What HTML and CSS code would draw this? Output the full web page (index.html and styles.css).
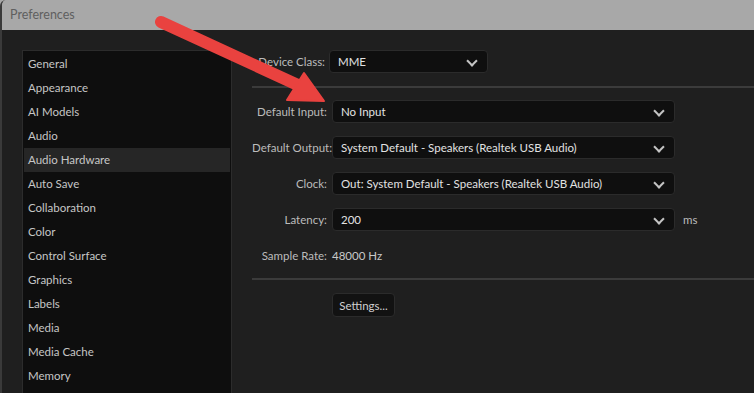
FILE: index.html
```html
<!DOCTYPE html>
<html lang="en">
<head>
    <meta charset="UTF-8">
    <title>Preferences</title>
    <link rel="stylesheet" href="styles.css">
</head>
<body>
    <div class="window">
        <div class="titlebar">Preferences</div>

        <div class="content">
            <!-- Lista de secciones -->
            <ul class="sidebar">
                <li>General</li>
                <li>Appearance</li>
                <li>AI Models</li>
                <li>Audio</li>
                <li class="active">Audio Hardware</li>
                <li>Auto Save</li>
                <li>Collaboration</li>
                <li>Color</li>
                <li>Control Surface</li>
                <li>Graphics</li>
                <li>Labels</li>
                <li>Media</li>
                <li>Media Cache</li>
                <li>Memory</li>
            </ul>

            <div class="pane">
                <div class="device-row">
                    <span class="label">Device Class:</span>
                    <div class="select small">MME <span class="chev"></span></div>
                </div>

                <div class="divider"></div>

                <div class="form">
                    <span class="label">Default Input:</span>
                    <div class="select">No Input <span class="chev"></span></div>
                    <span></span>

                    <span class="label">Default Output:</span>
                    <div class="select">System Default - Speakers (Realtek USB Audio) <span class="chev"></span></div>
                    <span></span>

                    <span class="label">Clock:</span>
                    <div class="select">Out: System Default - Speakers (Realtek USB Audio) <span class="chev"></span></div>
                    <span></span>

                    <span class="label">Latency:</span>
                    <div class="select">200 <span class="chev"></span></div>
                    <span class="unit">ms</span>

                    <span class="label rate">Sample Rate:</span>
                    <span class="value">48000 Hz</span>
                    <span></span>
                </div>

                <div class="divider second"></div>

                <div class="actions">
                    <button class="button">Settings...</button>
                </div>
            </div>
        </div>

        <!-- Flecha roja encima -->
        <svg class="arrow" width="754" height="393" viewBox="0 0 754 393">
            <line x1="161" y1="22" x2="300" y2="86" stroke="#e9423f" stroke-width="12" stroke-linecap="round"/>
            <polygon points="287,100 304,73 324,101" fill="#e9423f" stroke="#e9423f" stroke-width="2" stroke-linejoin="round"/>
        </svg>
    </div>
</body>
</html>
```

FILE: styles.css
```css
body {
    margin: 0;
    padding: 0;
    font-family: 'Lato', 'Noto Sans', sans-serif;
    font-size: 11.5px;
    background: #a7a7a7;
    overflow: hidden;
}

.window {
    position: relative;
    height: 393px;
    border-left: 2px solid #3a3a3a;
    border-top-left-radius: 6px;
    overflow: hidden;
}

.titlebar {
    height: 30px;
    line-height: 30px;
    padding-left: 8px;
    background: #a8a8a8;
    color: #5f5f5f;
    font-size: 12.5px;
}

.content {
    display: flex;
    height: 363px;
    background: #1f1f1f;
    padding: 20px 0 0 20px;
    box-sizing: border-box;
    white-space: nowrap;
}

/* Lista lateral */
.sidebar {
    list-style: none;
    margin: 0;
    padding: 1px 1px 0;
    width: 206px;
    flex-shrink: 0;
    background: #0e0e0e;
    border: 1px solid #2c2c2c;
    border-bottom: none;
}

.sidebar li {
    height: 24px;
    line-height: 24px;
    padding-left: 4px;
    color: #c6c6c6;
}

.sidebar li.active {
    background: #262626;
}

/* Panel derecho */
.pane {
    flex: 1;
}

.label {
    color: #bcbcbc;
    text-align: right;
}

.device-row {
    display: flex;
    align-items: center;
    gap: 4px;
    padding-left: 20px;
}

.device-row .label {
    width: 73px;
}

.select {
    position: relative;
    height: 23px;
    line-height: 21px;
    box-sizing: border-box;
    padding-left: 8px;
    background: #0f0f0f;
    border: 1px solid #2b2b2b;
    border-radius: 4px;
    color: #e2e2e2;
}

.select.small {
    width: 159px;
}

.chev {
    position: absolute;
    right: 11px;
    top: 6px;
    width: 6px;
    height: 6px;
    border-right: 2px solid #c4c4c4;
    border-bottom: 2px solid #c4c4c4;
    transform: rotate(45deg);
}

.divider {
    height: 2px;
    background: #3b3b3b;
    margin: 13px 0 12px 20px;
}

.divider.second {
    margin: 13px 0 13px 20px;
}

.form {
    display: grid;
    grid-template-columns: 75px 343px auto;
    column-gap: 5px;
    row-gap: 13px;
    align-items: center;
    padding-left: 20px;
}

.unit {
    color: #bcbcbc;
    margin-left: 3px;
}

.value,
.label.rate {
    color: #c8c8c8;
    height: 18px;
    line-height: 18px;
    margin-top: 3px;
}

.label.rate {
    color: #bcbcbc;
}

.actions {
    padding-left: 100px;
}

.button {
    font-family: inherit;
    font-size: 11.5px;
    width: 63px;
    height: 24px;
    background: #121212;
    color: #d0d0d0;
    border: 1px solid #2b2b2b;
    border-radius: 4px;
    padding: 0;
}

.arrow {
    position: absolute;
    top: 0;
    left: -2px;
    pointer-events: none;
}
```
